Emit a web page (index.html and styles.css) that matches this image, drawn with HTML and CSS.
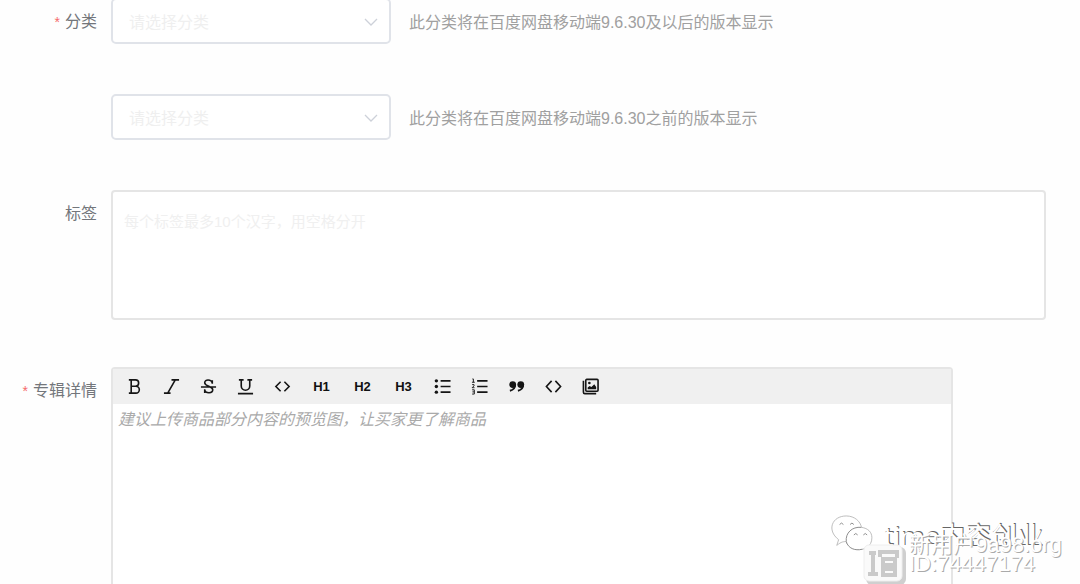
FILE: index.html
```html
<!DOCTYPE html>
<html lang="zh-CN">
<head>
<meta charset="utf-8">
<title>专辑</title>
<link rel="stylesheet" href="styles.css">
</head>
<body>
<form class="form">
  <div class="row">
    <label class="label required" for="category-new">分类</label>
    <div class="field">
      <div class="select-box">
        <select class="select" id="category-new"><option>请选择分类</option></select>
        <svg class="chevron" viewBox="0 0 14 8"><path d="M1 1l6 6 6-6"/></svg>
      </div>
      <span class="hint">此分类将在百度网盘移动端9.6.30及以后的版本显示</span>
    </div>
  </div>
  <div class="row">
    <span class="label"></span>
    <div class="field">
      <div class="select-box">
        <select class="select" aria-label="分类"><option>请选择分类</option></select>
        <svg class="chevron" viewBox="0 0 14 8"><path d="M1 1l6 6 6-6"/></svg>
      </div>
      <span class="hint">此分类将在百度网盘移动端9.6.30之前的版本显示</span>
    </div>
  </div>
  <div class="row">
    <label class="label" for="tags">标签</label>
    <textarea class="tags" id="tags" placeholder="每个标签最多10个汉字，用空格分开"></textarea>
  </div>
  <div class="row editor-row">
    <label class="label required" for="detail">专辑详情</label>
    <div class="editor">
      <div class="toolbar">
        <button class="tool" type="button" aria-label="B"><svg viewBox="0 0 18 18"><path d="M3 2h7a3.300 3.300 0 0 1 0 6.800H5M3 16h7.500a3.600 3.600 0 0 0 0-7.200M5.500 2v14"/></svg></button>
        <button class="tool" type="button" aria-label="I"><svg viewBox="0 0 18 18"><path d="M9 2h8M1 16h7M13 2L5 16"/></svg></button>
        <button class="tool" type="button" aria-label="S"><svg viewBox="0 0 18 18"><path d="M1 9.500h16M13 6V2.500M13 5C12 1.500 5 1 5 5c0 4 8.500 3.500 8.500 7.500 0 4-7.500 4-8.500.5M5 12v4"/></svg></button>
        <button class="tool" type="button" aria-label="U"><svg viewBox="0 0 18 18"><path d="M2 2h5M11 2h5M4.500 2v6.500a4.500 4.500 0 0 0 9 0V2M1 16.500h16"/></svg></button>
        <button class="tool" type="button" aria-label="code"><svg viewBox="0 0 18 18"><path d="M7 4L2 9l5 5M11 4l5 5-5 5"/></svg></button>
        <button class="tool heading" type="button">H1</button>
        <button class="tool heading" type="button">H2</button>
        <button class="tool heading" type="button">H3</button>
        <button class="tool" type="button" aria-label="ul"><svg viewBox="0 0 18 18"><path d="M7 3h10.500M7 9h10.500M7 15h10.500"/><g class="solid"><circle cx="2.500" cy="3" r="1.800"/><circle cx="2.500" cy="9" r="1.800"/><circle cx="2.500" cy="15" r="1.800"/></g></svg></button>
        <button class="tool" type="button" aria-label="ol"><svg viewBox="0 0 18 18"><path d="M6.500 3h11M6.500 9h11M6.500 15h11"/><path class="thin" d="M1.500 1h1v3.500M1 4.500h3M1.200 7h2v1.300l-2 2h2.500M1.200 12.500h2.300v4.500H1.200M1.500 14.700h2"/></svg></button>
        <button class="tool" type="button" aria-label="quote"><svg viewBox="0 0 18 18"><g class="solid"><circle cx="5" cy="7" r="3.600"/><circle cx="13.500" cy="7" r="3.600"/></g><path class="mark" d="M7.500 7c.2 3.500-1.500 5.500-5.500 6.500M16 7c.2 3.500-1.500 5.500-5.500 6.500"/></svg></button>
        <button class="tool" type="button" aria-label="code block"><svg viewBox="0 0 18 18"><path d="M7 3L1.500 9 7 15M11 3l5.500 6-5.500 6"/></svg></button>
        <button class="tool" type="button" aria-label="image"><svg viewBox="0 0 18 18"><rect x="4" y="1.500" width="13" height="12.500" rx="1"/><path d="M1.500 3v12a1.500 1.500 0 0 0 1.500 1.500h12"/><path class="solid" d="M6 12V10l2-1.500 2 1L13 6.500l2 3V12z"/><circle class="solid" cx="7.800" cy="5.300" r="1.400"/></svg></button>
      </div>
      <textarea class="content" id="detail" placeholder="建议上传商品部分内容的预览图，让买家更了解商品"></textarea>
    </div>
  </div>
</form>
<div class="watermark">
  <span class="mark-name">time内容创业</span>
  <svg class="wechat" viewBox="0 0 44 40"><path d="M7 32l2-6C-4 16 2 1 17 1c9 0 15 6 16 12 7 1 11 5 11 11 0 9-8 14-17 12-5-1-9-4-10-8-3 0-5 0-10 4z"/><path class="outline" d="M33 13c-10-1-17 6-16 15 2 7 9 10 17 8"/><path class="outline" d="M10 10q2-3 4 0M21 10q2-3 4 0M25 21q2-3 4 0M35 21q2-3 4 0"/></svg>
  <svg class="seal" viewBox="0 0 44 42"><rect class="seal-shadow" x="3" y="3" width="40" height="38" rx="6"/><rect class="seal-frame" x="1" y="1" width="38" height="36" rx="5"/><path class="seal-strokes" d="M6 9h7M10 9v20M5 30h10M17 13V8h17v6M20 13v20M20 15h12v6H20M20 25h12v6H20"/></svg>
  <span class="mark-site">新用户9a98.org</span>
  <span class="mark-id">ID:74447174</span>
</div>
</body>
</html>
```
FILE: styles.css
```css
* {
  box-sizing: border-box;
}

body {
  margin: 0;
  height: 100vh;
  position: relative;
  display: flex;
  flex-direction: column;
  overflow: hidden;
  background: #fefefe;
  font: 16px/24px "Liberation Sans", "Noto Sans CJK SC", sans-serif;
}

.form {
  flex: 1;
  display: flex;
  flex-direction: column;
  gap: 50px;
  margin-top: -2px;
  padding-right: 34px;
}

.row {
  display: grid;
  grid-template-columns: 97px 1fr;
  column-gap: 14px;
}

.editor-row {
  flex: 1;
  margin-top: -3px;
}

.label {
  padding-top: 12px;
  text-align: right;
  color: #73767b;
}

.required::before {
  content: "*";
  margin-right: 5px;
  font-size: 14px;
  color: #f56c6c;
}

.field {
  display: flex;
  align-items: center;
  gap: 18px;
}

.select-box {
  position: relative;
  width: 280px;
}

.select {
  display: block;
  width: 100%;
  height: 46px;
  padding: 3px 16px 0;
  appearance: none;
  border: 2px solid #e0e3e9;
  border-radius: 5px;
  background: #fff;
  color: #efefef;
  font: inherit;
}

.chevron {
  position: absolute;
  top: 20px;
  right: 13px;
  width: 14px;
  height: 8px;
  fill: none;
  stroke: #cdd1d9;
  stroke-width: 1.3;
}

.hint {
  padding-top: 4px;
  color: #a0a0a0;
}

.tags,
.content {
  display: block;
  width: 100%;
  resize: none;
  background: #fff;
  font: inherit;
}

.tags {
  height: 130px;
  padding: 18px 11px;
  border: 2px solid #e5e5e5;
  border-radius: 4px;
  font-size: 15px;
}

.tags::placeholder {
  color: #f0f0f0;
}

.editor {
  display: flex;
  flex-direction: column;
  width: 90%;
  border: 2px solid #e5e5e5;
  border-bottom: 0;
  border-radius: 4px 4px 0 0;
}

.toolbar {
  display: flex;
  align-items: center;
  gap: 20px;
  height: 35px;
  padding-left: 13px;
  background: #f0f0f0;
}

.tool {
  padding: 0;
  border: 0;
  background: none;
  color: #111;
  font: bold 13px/17px "Liberation Sans", sans-serif;
}

.tool svg {
  display: block;
  width: 17px;
  height: 17px;
  fill: none;
  stroke: #151515;
  stroke-width: 1.7;
}

.heading {
  width: 21px;
}

.tool .solid {
  fill: #151515;
  stroke: none;
}

.tool .thin {
  stroke-width: 1;
}

.tool .mark {
  stroke-width: 2;
}

.content {
  flex: 1;
  padding: 4px 5px;
  border: 0;
}

.content::placeholder {
  color: #aaa;
  font-style: italic;
}

.watermark {
  position: absolute;
  right: 0;
  bottom: 0;
  width: 254px;
  height: 72px;
  color: #fff;
  pointer-events: none;
}

.watermark > * {
  position: absolute;
  white-space: nowrap;
}

.wechat {
  left: 3px;
  top: 3px;
  width: 44px;
  height: 38px;
  fill: #fff;
  stroke: #bbb;
  stroke-width: 1;
}

.wechat .outline {
  stroke: #888;
}

.mark-name {
  left: 58px;
  top: 8px;
  font-family: "Noto Sans", "Noto Sans CJK SC", sans-serif;
  font-size: 26px;
  line-height: 32px;
  text-shadow: 1px -1px 0 #666;
}

.seal {
  left: 37px;
  top: 32px;
  width: 44px;
  height: 42px;
  fill: none;
}

.seal-shadow {
  fill: #cfcfcf;
}

.seal-frame {
  fill: #fafafa;
  stroke: #eee;
  stroke-width: 1;
}

.seal-strokes {
  stroke: #cacaca;
  stroke-width: 4;
}

.mark-site,
.mark-id {
  left: 83px;
  font-size: 22px;
  line-height: 24px;
  text-shadow: 1px 1px 0 #aaa;
}

.mark-site {
  top: 21px;
}

.mark-id {
  top: 40px;
}
```
